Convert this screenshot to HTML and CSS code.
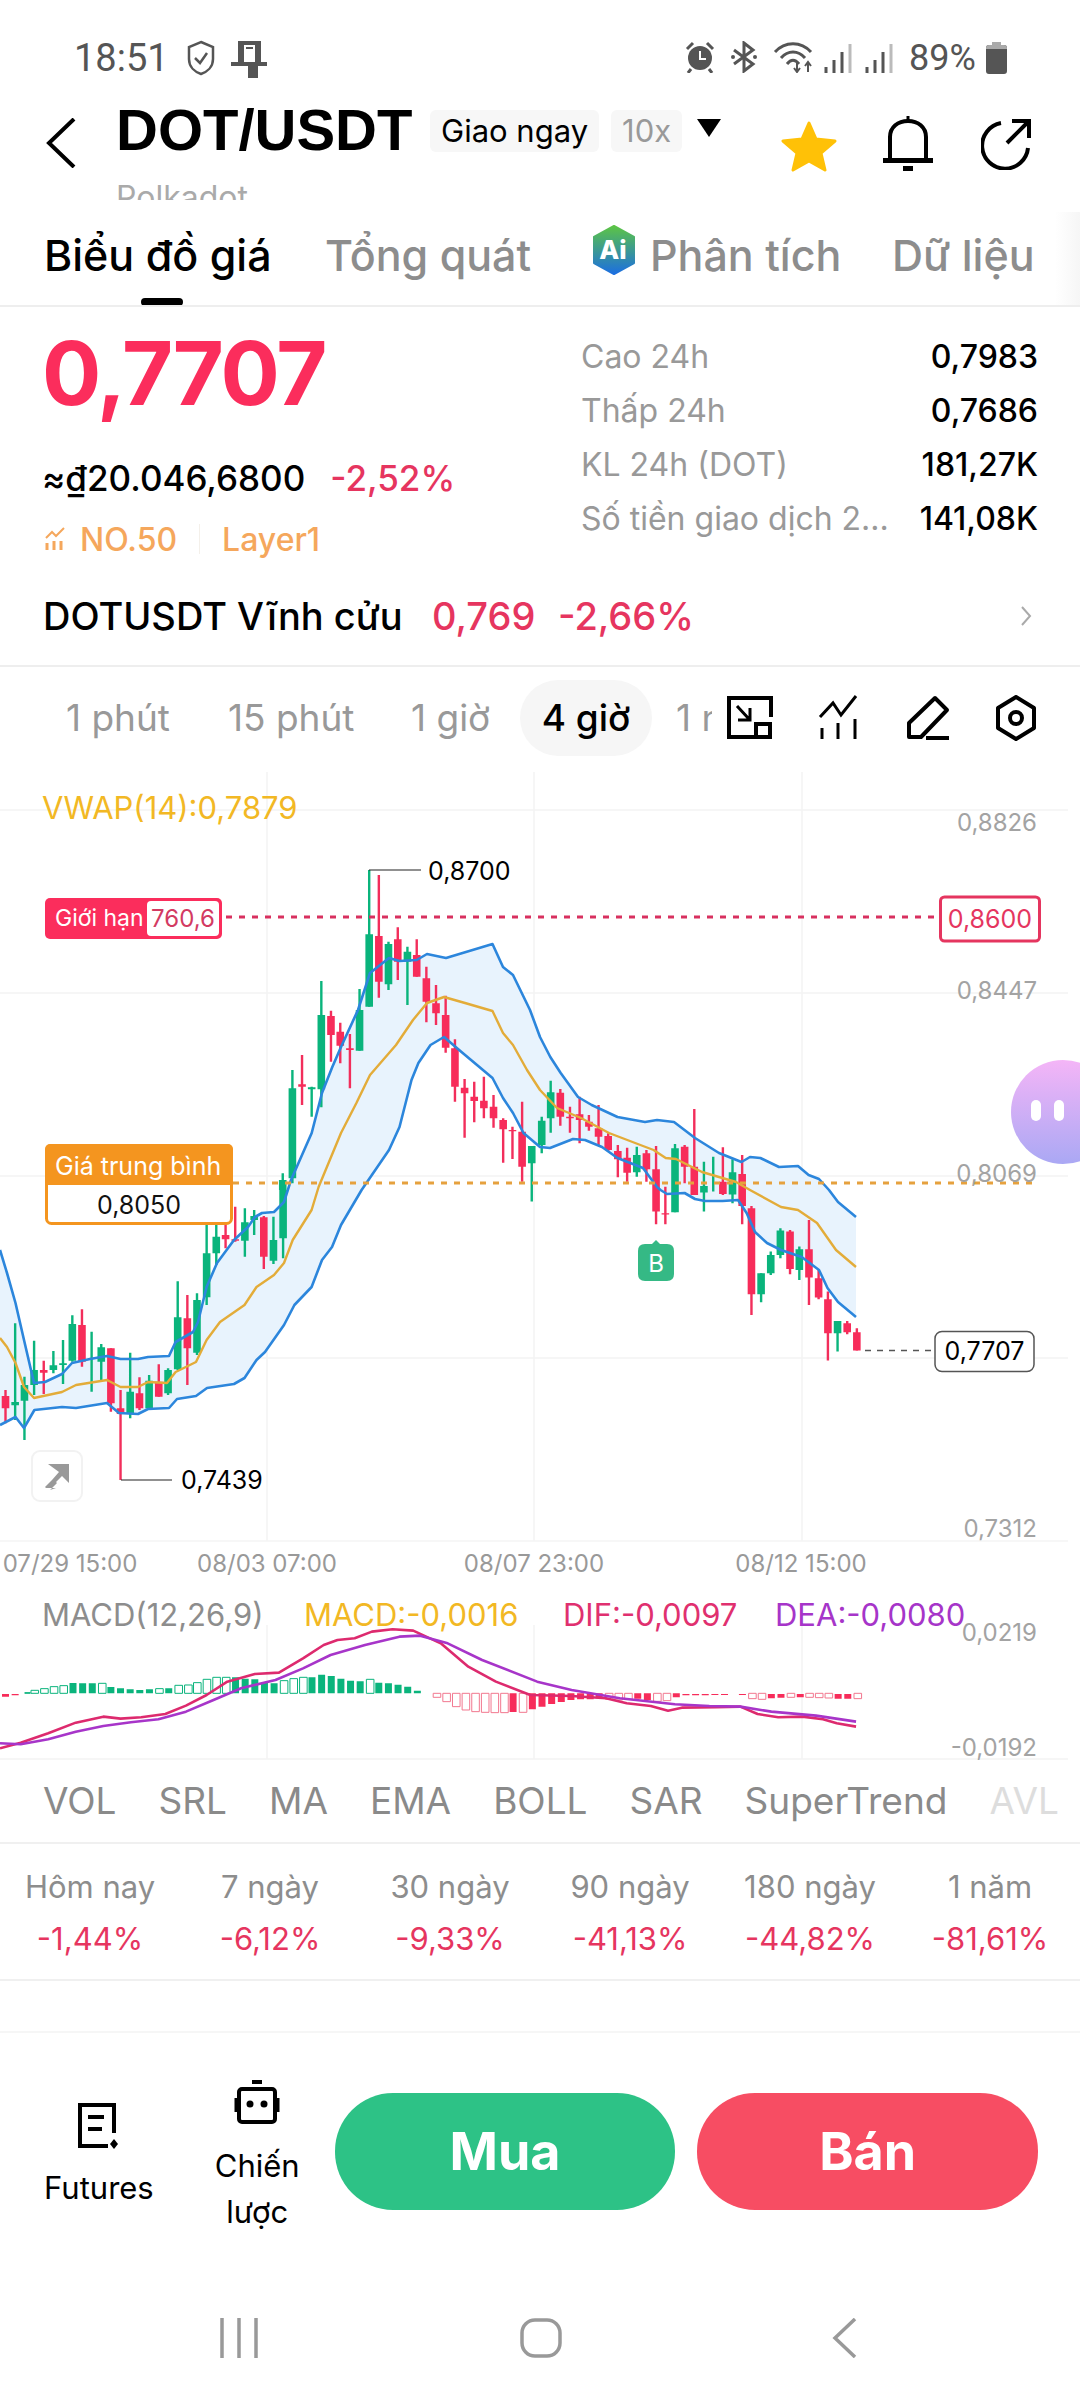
FILE: index.html
```html
<!DOCTYPE html>
<html>
<head>
  <meta charset="utf-8">
  <title>DOT/USDT</title>
  <link rel="stylesheet" href="styles.css">
</head>
<body>
  <!-- status bar -->
  <div class="status">
    <span class="time">18:51</span>
    <svg class="st-shield" viewBox="0 0 28 36"><path d="M14 2 L26 7 V19 C26 27 20 32 14 34 C8 32 2 27 2 19 V7 Z"/><path d="M8 18 L13 23 L20 13"/></svg>
    <svg class="st-device" viewBox="0 0 36 38"><path d="M7 1 H30 V22 H36 V26 H27 V38 H17 V26 H0 V22 H7 Z M13 5 V22 H24 V5 Z" fill="#555" fill-rule="evenodd"/><rect x="15" y="7" width="7" height="2" fill="#555"/></svg>
    <span class="st-spacer"></span>
    <svg class="st-alarm" viewBox="0 0 30 32"><circle cx="15" cy="17" r="12" fill="#555"/><path d="M15 10 V18 H21" stroke="#fff" stroke-width="2" fill="none"/><path d="M2 8 L8 2 M28 8 L22 2 M6 28 L3 32 M24 28 L27 32" stroke="#555" stroke-width="3"/></svg>
    <svg class="st-bt" viewBox="0 0 28 32"><path d="M4 9 L23 23 L14 30 V2 L23 9 L4 23" fill="none" stroke="#555" stroke-width="3"/><circle cx="3" cy="16" r="2" fill="#555"/><circle cx="25" cy="16" r="2" fill="#555"/></svg>
    <svg class="st-wifi" viewBox="0 0 42 32"><path d="M2 11 C12 0 28 0 38 11 M8 17 C15 9 25 9 32 17 M14 23 C18 18 22 18 26 23" fill="none" stroke="#555" stroke-width="3"/><path d="M24 20 V31 M21 27 L24 31 L27 27 M35 31 V22 M32 25 L35 21 L38 25" fill="none" stroke="#555" stroke-width="2"/></svg>
    <svg class="st-sig" viewBox="0 0 28 30"><path d="M2 30 V24 M10 30 V17 M18 30 V9" stroke="#555" stroke-width="3"/><path d="M26 30 V1" stroke="#bbb" stroke-width="3"/></svg>
    <svg class="st-sig st-sig2" viewBox="0 0 28 30"><path d="M2 30 V24 M10 30 V17 M18 30 V9" stroke="#555" stroke-width="3"/><path d="M26 30 V1" stroke="#bbb" stroke-width="3"/></svg>
    <span class="pct">89%</span>
    <svg class="st-batt" viewBox="0 0 21 32"><path d="M6 0 H15 V3 H18 Q21 3 21 6 V29 Q21 32 18 32 H3 Q0 32 0 29 V6 Q0 3 3 3 H6 Z" fill="#555"/><path d="M6 0 H15 V3 H18 Q21 3 21 6 V7 H0 V6 Q0 3 3 3 H6 Z" fill="#aaa"/></svg>
  </div>

  <!-- header -->
  <div class="header">
    <svg class="back" viewBox="0 0 30 50"><path d="M28 1 L3 25 L28 49" transform="translate(0 0)"/></svg>
    <div class="title-block">
      <div class="title-row">
        <span class="pair">DOT/USDT</span>
        <span class="tag">Giao ngay</span>
        <span class="tag tag-lev">10x</span>
        <span class="caret"></span>
      </div>
      <div class="coin-name">Polkadot</div>
    </div>
    <svg class="ic-star" viewBox="0 0 58 52"><path d="M29 3 L36 19 L55 21 L41 33 L45 50 L29 41 L13 50 L17 33 L3 21 L22 19 Z"/></svg>
    <svg class="ic-bell" viewBox="0 0 50 56"><path d="M7 45 V22 C7 12 15 6 25 6 C35 6 43 12 43 22 V45" fill="none" stroke="#000" stroke-width="4"/><path d="M25 1 V7" stroke="#000" stroke-width="3"/><rect x="0" y="43" width="50" height="5" fill="#000"/><rect x="20" y="51" width="10" height="5" fill="#000"/></svg>
    <svg class="ic-share" viewBox="0 0 52 52"><path d="M20 5 A23 23 0 1 0 47 30" fill="none" stroke="#000" stroke-width="4"/><path d="M26 25 L47 4 M31 3 H48 V20" fill="none" stroke="#000" stroke-width="4"/></svg>
  </div>

  <!-- tabs -->
  <div class="tabs">
    <span class="tab tab-on">Biểu đồ giá</span>
    <span class="tab tab-overview">Tổng quát</span>
    <svg class="ai-logo" viewBox="0 0 44 50">
      <defs><linearGradient id="aig" x1="0" y1="0" x2="0" y2="1"><stop offset="0" stop-color="#5cc445"/><stop offset="1" stop-color="#1c6fe0"/></linearGradient></defs>
      <path d="M22 1 L42 12 V38 L22 49 L2 38 V12 Z" fill="url(#aig)" stroke="url(#aig)" stroke-width="2" stroke-linejoin="round"/>
      <text x="21" y="34" class="ai-text">Ai</text>
    </svg>
    <span class="tab tab-ai">Phân tích</span>
    <span class="tab tab-data">Dữ liệu</span>
    <span class="tab-line"></span>
    <span class="tab-fade"></span>
  </div>

  <!-- price block -->
  <div class="price-block">
    <div class="price-left">
      <div class="last">0,7707</div>
      <div class="conv"><span class="conv-val">≈₫20.046,6800</span><span class="conv-pct">-2,52%</span></div>
      <div class="rank">
        <svg class="rank-ic" viewBox="0 0 22 24"><path d="M2 11 L8 5 L12 9 L20 1" fill="none" stroke="#f5a75c" stroke-width="2"/><path d="M3 16 V23 M10 14 V23 M17 14 V23" stroke="#f5a75c" stroke-width="3"/></svg>
        <span class="rank-no">NO.50</span>
        <span class="rank-sep"></span>
        <span>Layer1</span>
      </div>
    </div>
    <div class="stats">
      <div class="stat"><span class="stat-k">Cao 24h</span><span class="stat-v">0,7983</span></div>
      <div class="stat"><span class="stat-k">Thấp 24h</span><span class="stat-v">0,7686</span></div>
      <div class="stat"><span class="stat-k">KL 24h (DOT)</span><span class="stat-v">181,27K</span></div>
      <div class="stat"><span class="stat-k">Số tiền giao dịch 2...</span><span class="stat-v">141,08K</span></div>
    </div>
  </div>

  <!-- perpetual row -->
  <div class="perp">
    <span class="perp-name">DOTUSDT Vĩnh cửu</span>
    <span class="perp-price">0,769</span>
    <span class="perp-pct">-2,66%</span>
    <svg class="perp-arrow" viewBox="0 0 12 22"><path d="M2 2 L10 11 L2 20"/></svg>
  </div>

  <!-- timeframe row -->
  <div class="frames">
    <span class="frame f1">1 phút</span>
    <span class="frame f2">15 phút</span>
    <span class="frame f3">1 giờ</span>
    <span class="frame frame-on">4 giờ</span>
    <span class="frame f5">1 ngày</span>
    <div class="tools">
      <svg class="tool" viewBox="0 0 46 46"><path d="M28 42 H2 V3 H44 V22" fill="none" stroke="#000" stroke-width="4"/><rect x="29" y="29" width="14" height="13" fill="none" stroke="#000" stroke-width="4"/><path d="M10 11 L22 24 M23 13 V25 H11" fill="none" stroke="#000" stroke-width="3"/></svg>
      <svg class="tool tool-chart" viewBox="0 0 42 46"><path d="M2 22 L15 8 L23 20 L38 1" fill="none" stroke="#000" stroke-width="3"/><path d="M4 33 V44 M20 28 V44 M37 24 V44" stroke="#000" stroke-width="3"/></svg>
      <svg class="tool tool-pen" viewBox="0 0 44 46"><path d="M3 42 V28 L29 3 L41 15 L15 42 Z" fill="none" stroke="#000" stroke-width="4" stroke-linejoin="round"/><path d="M20 43 H43" stroke="#000" stroke-width="4"/></svg>
      <svg class="tool tool-set" viewBox="0 0 42 46"><path d="M21 2 L39 13 V33 L21 44 L3 33 V13 Z" fill="none" stroke="#000" stroke-width="4" stroke-linejoin="round"/><circle cx="21" cy="23" r="6" fill="none" stroke="#000" stroke-width="4"/></svg>
    </div>
  </div>

  <!-- price chart -->
  <div class="chart">
    <svg class="chart-svg" viewBox="0 772 1080 813" width="1080" height="813">
      <path class="grid" d="M0 810H1068M0 993H1068M0 1176H1068M0 1358H1068M267 772V1541M534 772V1541M802 772V1541"/>
      <polygon class="band" points="0,1250 7,1273 15.5,1303 24,1340 34,1383 45,1382 62,1374 72,1363 90,1359 107,1356 120.5,1359 138,1359 148,1357 169,1356 175.6,1342 193,1332 198,1322 206.6,1287 217,1263 234,1240 248,1227 255,1217 262,1213 274,1212 284,1202 291,1180 311.7,1133 322,1093 332.3,1067 341,1047 358,1010 370,973 389,958 399.5,961 416.7,960 427,954 446,958 492.5,944 503,967 513,975 530,1010 540,1037 550.3,1057 560.7,1073 578,1097 591.7,1105 617.5,1117 645,1122 657,1120 674,1122 695,1138 719,1153 741.5,1162 750,1157 760.4,1158 779,1167 798,1166 808.6,1175 819,1179 829,1190 838,1202 856,1217 856,1317 838,1302 827.5,1288 819,1270 801.7,1257 781,1250 767,1243 755,1232 746.6,1213 738,1200 722.5,1201 705,1201 695,1199 684.6,1193 667,1194 660.5,1190 657,1187 643,1168 617.5,1158 602,1147 585,1140 573,1139 550,1148 540,1147 523.5,1133 513,1113 503,1098 492.5,1078 461.5,1052 444,1037 430.5,1045 418.4,1063 411.5,1080 399.5,1127 389,1150 361.6,1190 341,1225 332,1247 322,1260 311.6,1287 294.4,1305 284,1325 265,1352 256.5,1360 244.5,1378 234,1384 207,1388 196,1396 177,1399 169,1408 148,1409 138,1414 119,1413 107,1403 76,1408 62,1407 34.4,1410 24,1428 15.5,1417 0,1425"/>

      <g transform="translate(0 1190) scale(.3444 .3333)">
        <path class="wick-up" d="M44 400V690M71 560V750M99 452V615M155 483V550M183 450V582M210 376V515M266 425V605M294 462V570M378 488V685M433 555V655M488 535V615M516 274V540M572 310V495M600 105V345M628 105V225M711 55V200M738 60V135M794 80V222M822 0V205"/>
        <path class="body-up" d="M44 636V646M71 585V632M99 540V585M155 526V540M183 520V525M210 402V512M294 472V515M378 605V672M433 572V655M488 540V610M516 382V538M572 330V488M600 190V322M628 140V190M711 97V152M738 78V90M794 150V212M822 0V145"/>
        <path class="wick-dn" d="M16 600V700M127 512V612M238 358V530M322 475V665M350 600V870M405 562V660M461 523V620M544 315V585M655 105V175M683 50V155M766 78V237"/>
        <path class="body-dn" d="M16 618V655M127 540V548M238 405V515M322 475V640M350 655V672M405 610V655M461 575V620M544 385V475M655 135V148M683 148V152M766 82V200"/>
      </g>
      <g transform="translate(0 770) scale(.3444 .3333)">
        <path class="wick-up" d="M821 1210V1260M849 900V1240M905 950V1040M933 633V1012M1044 657V842M1072 300V710M1128 515V660M1183 530V705M1544 1128V1295"/>
        <path class="body-up" d="M821 1230V1260M849 955V1225M905 952V958M933 735V958M1044 720V842M1072 493V710M1128 522V643M1183 545V575M1544 1128V1180"/>
        <path class="wick-dn" d="M877 855V1005M961 722V875M988 758V880M1016 792V955M1100 315V683M1155 472V630M1210 508V620M1238 590V757M1266 645V765M1294 677V848M1321 808V995M1349 927V1103M1377 935V1057M1405 920V1045M1433 975V1073M1461 1045V1178M1488 1070V1167M1516 995V1235"/>
        <path class="body-dn" d="M877 943V950M961 738V795M988 785V827M1016 835V840M1100 498V635M1155 508V575M1210 555V620M1238 625V695M1266 700V730M1294 735V833M1321 835V950M1349 953V970M1377 980V993M1405 992V1015M1433 1010V1045M1461 1050V1078M1488 1080V1084M1516 1085V1190"/>
      </g>
      <g transform="translate(540 770) scale(.3444 .3333)">
        <path class="wick-up" d="M5 1040V1150M31 932V1088M281 1130V1220M392 1122V1327M476 1175V1325M503 1160V1265M559 1168V1300M642 1510V1597M670 1445V1515M698 1375V1465M753 1430V1530M864 1653V1745"/>
        <path class="body-up" d="M5 1052V1125M31 967V1045M281 1155V1207M392 1135V1327M476 1248V1268M559 1207V1274M642 1510V1573M670 1455V1510M698 1382V1455M753 1438V1500M864 1653V1690"/>
        <path class="wick-dn" d="M59 957V1067M87 1010V1088M115 980V1120M142 1035V1082M170 1005V1125M198 1090V1145M226 1125V1222M253 1133V1235M309 1140V1235M337 1128V1363M364 1250V1363M420 1125V1240M448 1017V1275M531 1132V1275M587 1155V1363M614 1308V1635M726 1380V1513M781 1350V1605M809 1500V1588M836 1565V1772M892 1653V1693M920 1675V1742"/>
        <path class="body-dn" d="M59 968V1040M87 1040V1045M115 1033V1050M142 1055V1070M170 1075V1100M198 1098V1140M226 1143V1168M253 1163V1208M309 1150V1198M337 1198V1325M364 1330V1334M420 1130V1190M448 1190V1275M531 1235V1272M587 1212V1308M614 1315V1573M726 1385V1497M781 1438V1523M809 1525V1583M836 1588V1690M892 1660V1687M920 1687V1742"/>
      </g>

      <polyline class="line-blue" points="0,1250 7,1273 15.5,1303 24,1340 34,1383 45,1382 62,1374 72,1363 90,1359 107,1356 120.5,1359 138,1359 148,1357 169,1356 175.6,1342 193,1332 198,1322 206.6,1287 217,1263 234,1240 248,1227 255,1217 262,1213 274,1212 284,1202 291,1180 311.7,1133 322,1093 332.3,1067 341,1047 358,1010 370,973 389,958 399.5,961 416.7,960 427,954 446,958 492.5,944 503,967 513,975 530,1010 540,1037 550.3,1057 560.7,1073 578,1097 591.7,1105 617.5,1117 645,1122 657,1120 674,1122 695,1138 719,1153 741.5,1162 750,1157 760.4,1158 779,1167 798,1166 808.6,1175 819,1179 829,1190 838,1202 856,1217"/>
      <polyline class="line-gold" points="0,1338 7,1347 15.5,1363 24,1387 34,1398 62,1392 76,1385 107,1380 120.5,1387 138,1387 148,1382 167,1383 175.6,1372 196,1362 206.6,1340 220,1322 244.5,1305 256.5,1287 274,1275 284,1263 292.7,1240 311.6,1210 318.6,1187 341,1133 356.4,1103 370,1075 396,1045 413,1020 427,1003 444,997 465,1003 492.5,1011 503,1033 513,1045 527,1070 540,1090 557,1108 581,1118 609,1133 643,1146 653.6,1150 665.7,1158 676,1159 702,1172 736,1182 750,1190 781,1207 798,1210 817,1223 836,1250 856,1267"/>
      <polyline class="line-blue" points="0,1425 15.5,1417 24,1428 34.4,1410 62,1407 76,1408 107,1403 119,1413 138,1414 148,1409 169,1408 177,1399 196,1396 207,1388 234,1384 244.5,1378 256.5,1360 265,1352 284,1325 294.4,1305 311.6,1287 322,1260 332,1247 341,1225 361.6,1190 389,1150 399.5,1127 411.5,1080 418.4,1063 430.5,1045 444,1037 461.5,1052 492.5,1078 503,1098 513,1113 523.5,1133 540,1147 550,1148 573,1139 585,1140 602,1147 617.5,1158 643,1168 657,1187 660.5,1190 667,1194 684.6,1193 695,1199 705,1201 722.5,1201 738,1200 746.6,1213 755,1232 767,1243 781,1250 801.7,1257 819,1270 827.5,1288 838,1302 856,1317"/>

      <text class="legend-vwap" x="42" y="819">VWAP(14):0,7879</text>

      <!-- extreme marks -->
      <path class="mark-line" d="M369 870H421M121 1480H172"/>
      <text class="lbl" x="428" y="880">0,8700</text>
      <text class="lbl" x="181" y="1489">0,7439</text>

      <!-- limit order -->
      <path class="dash-red" d="M226 917H940"/>
      <rect class="limit-bg" x="45" y="898" width="177" height="41" rx="5"/>
      <rect class="limit-in" x="147" y="901" width="72" height="35" rx="4"/>
      <text class="limit-k" x="55" y="926">Giới hạn</text>
      <text class="limit-v" x="183" y="927">760,6</text>
      <rect class="limit-box" x="940.5" y="897" width="99" height="44" rx="4"/>
      <text class="limit-p" x="990" y="928">0,8600</text>

      <!-- average price -->
      <path class="dash-orange" d="M233 1183H1037"/>
      <rect class="avg-box" x="46.5" y="1145.5" width="185" height="78" rx="5"/>
      <path class="avg-top" d="M45 1185V1149a5 5 0 0 1 5-5H228a5 5 0 0 1 5 5V1185Z"/>
      <text class="avg-k" x="55" y="1175">Giá trung bình</text>
      <text class="avg-v" x="139" y="1214">0,8050</text>

      <!-- buy marker -->
      <path class="mark-b" d="M645 1244H652L656 1240L660 1244H667Q674 1244 674 1251V1274Q674 1281 667 1281H645Q638 1281 638 1274V1251Q638 1244 645 1244Z"/>
      <text class="mark-b-t" x="656" y="1272">B</text>

      <!-- last price -->
      <path class="dash-last" d="M865 1350.5H932"/>
      <rect class="last-box" x="935" y="1331.5" width="99" height="40" rx="7"/>
      <text class="lbl lbl-mid" x="984.5" y="1360">0,7707</text>

      <!-- expand -->
      <rect class="expand-box" x="32" y="1451" width="50" height="50" rx="8"/>
      <path class="expand-ic" d="M48 1464H69V1464L69 1483 L62 1476 L55 1483 L52 1480 L59 1472 Z M45 1487L53 1479L57 1483L50 1490L56 1488L56 1488L46 1488Z"/>

      <text class="axis" x="1037" y="831">0,8826</text>
      <text class="axis" x="1037" y="999">0,8447</text>
      <text class="axis" x="1037" y="1182">0,8069</text>
      <text class="axis" x="1037" y="1537">0,7312</text>

      <path class="grid" d="M0 1541H1068"/>
      <text class="time-lbl" x="70" y="1572">07/29 15:00</text>
      <text class="time-lbl" x="267" y="1572">08/03 07:00</text>
      <text class="time-lbl" x="534" y="1572">08/07 23:00</text>
      <text class="time-lbl" x="801" y="1572">08/12 15:00</text>
    </svg>
    <div class="bot"><span class="bot-eye"></span><span class="bot-eye"></span></div>
  </div>

  <!-- macd -->
  <div class="macd">
    <svg class="macd-svg" viewBox="0 1585 1080 175" width="1080" height="175">
      <path class="grid" d="M267 1625V1759M534 1625V1759M802 1625V1759M0 1759H1068"/>
      <g transform="translate(0 1560) scale(.6887 .3333)">
        <path class="hist-up" d="M106 369V400M120 370V400M134 370V400M161 381V400M175 385V400M189 388V400M203 390V400M217 388V400M245 385V400M342 352V400M356 356V400M370 358V400M384 368V400M398 370V400M453 352V400M467 344V400M481 348V400M495 356V400M509 362V400M523 364V400M550 368V400M564 370V400M578 374V400M592 380V400M606 392V400"/>
        <path class="hist-up-h" d="M36 398h8V400h-8zM45 391h11V400h-11zM59 386h11V400h-11zM73 380h11V400h-11zM87 377h11V400h-11zM143 370h11V400h-11zM226 386h11V400h-11zM254 376h11V400h-11zM268 375h11V400h-11zM281 368h11V400h-11zM295 358h11V400h-11zM309 352h11V400h-11zM323 352h11V400h-11zM407 362h11V400h-11zM421 356h11V400h-11zM435 352h11V400h-11zM532 358h11V400h-11z"/>
        <path class="hist-dn" d="M8 402V410M22 402V406M745 400V456M773 400V448M787 400V440M801 400V432M815 400V426M829 400V420M843 400V418M857 400V418M870 400V415M926 400V416M940 400V420M982 400V412M996 402V406M1010 402V406M1024 402V406M1038 402V405M1052 402V405M1078 402V405M1120 402V415M1134 402V413M1162 402V412M1217 402V416M1231 402V416"/>
        <path class="hist-dn-h" d="M629 400h11V412h-11zM643 400h11V425h-11zM657 400h11V440h-11zM671 400h11V450h-11zM685 400h11V455h-11zM699 400h11V457h-11zM713 400h11V458h-11zM727 400h11V458h-11zM754 400h11V457h-11zM879 400h11V418h-11zM893 400h11V420h-11zM907 400h11V418h-11zM949 400h11V424h-11zM963 400h11V422h-11zM1087 400h11V416h-11zM1101 400h11V418h-11zM1143 400h11V412h-11zM1170 400h11V412h-11zM1184 400h11V413h-11zM1198 400h11V414h-11zM1240 400h11V416h-11z"/>
        <polyline class="line-dif" points="0,565 30,548 70,520 110,488 150,470 175,476 205,472 240,462 270,437 300,405 330,365 370,342 405,338 440,295 470,255 490,240 515,235 540,215 570,208 600,212 640,250 680,320 720,365 770,405 830,408 880,415 910,430 945,438 970,452 990,443 1040,442 1075,440 1100,462 1130,472 1165,470 1195,478 1215,490 1243,500"/>
        <polyline class="line-dea" points="0,550 30,553 70,538 110,515 150,498 190,487 230,478 270,455 310,420 350,385 400,360 440,325 480,285 530,255 580,230 610,227 650,250 700,300 780,365 830,390 900,415 980,433 1030,438 1075,440 1120,455 1185,467 1243,485"/>
      </g>
      <text class="axis axis-macd" x="1037" y="1641">0,0219</text>
      <text class="axis axis-macd" x="1037" y="1756">-0,0192</text>
    </svg>
    <div class="macd-legend">
      <span class="m-name">MACD(12,26,9)</span>
      <span class="m-macd">MACD:-0,0016</span>
      <span class="m-dif">DIF:-0,0097</span>
      <span class="m-dea">DEA:-0,0080</span>
    </div>
  </div>

  <!-- indicators -->
  <div class="indicators">
    <span>VOL</span><span>SRL</span><span>MA</span><span>EMA</span><span>BOLL</span><span>SAR</span><span>SuperTrend</span><span class="ind-fade">AVL</span>
  </div>

  <!-- performance -->
  <div class="perf">
    <div class="perf-col"><span class="perf-k">Hôm nay</span><span class="perf-v">-1,44%</span></div>
    <div class="perf-col"><span class="perf-k">7 ngày</span><span class="perf-v">-6,12%</span></div>
    <div class="perf-col"><span class="perf-k">30 ngày</span><span class="perf-v">-9,33%</span></div>
    <div class="perf-col"><span class="perf-k">90 ngày</span><span class="perf-v">-41,13%</span></div>
    <div class="perf-col"><span class="perf-k">180 ngày</span><span class="perf-v">-44,82%</span></div>
    <div class="perf-col"><span class="perf-k">1 năm</span><span class="perf-v">-81,61%</span></div>
  </div>
  <div class="gap-row"></div>

  <!-- actions -->
  <div class="actions">
    <div class="act act-fut">
      <svg class="act-ic" viewBox="0 0 42 46"><path d="M30 43 H2 V2 H36 V30" fill="none" stroke="#000" stroke-width="4"/><path d="M10 14 H26 M10 26 H24" stroke="#000" stroke-width="4"/><path d="M36 36 L40 41 L36 46 L32 41 Z" fill="#000"/></svg>
      <span>Futures</span>
    </div>
    <div class="act act-bot">
      <svg class="act-ic" viewBox="0 0 46 44"><path d="M18 0 H28 V4 H18 Z" fill="#000"/><rect x="5" y="9" width="36" height="33" rx="3" fill="none" stroke="#000" stroke-width="4"/><circle cx="16" cy="24" r="3.5" fill="#000"/><circle cx="30" cy="24" r="3.5" fill="#000"/><path d="M2 18 V32 M44 18 V32" stroke="#000" stroke-width="3"/></svg>
      <span>Chiến<br>lược</span>
    </div>
    <div class="btn btn-buy">Mua</div>
    <div class="btn btn-sell">Bán</div>
  </div>

  <!-- nav bar -->
  <div class="nav">
    <svg class="nav-recent" viewBox="0 0 38 40"><path d="M2 0 V40 M19 0 V40 M36 0 V40"/></svg>
    <svg class="nav-home" viewBox="0 0 42 40"><rect x="2" y="2" width="38" height="36" rx="13"/></svg>
    <svg class="nav-back" viewBox="0 0 25 40"><path d="M23 1 L3 20 L23 39"/></svg>
  </div>
</body>
</html>
```

FILE: styles.css
```css
* {
  box-sizing: border-box;
}

html, body {
  margin: 0;
  padding: 0;
  background: #fff;
}

body {
  width: 1080px;
  height: 2400px;
  overflow: hidden;
  font-family: Inter, "Noto Sans", "Liberation Sans", sans-serif;
  color: #000;
}

svg {
  display: block;
  flex: none;
}

/* status bar */
.status {
  height: 90px;
  padding: 40px 73px 0 74px;
  display: flex;
  align-items: flex-start;
  color: #555;
}

.time {
  font-family: Roboto, sans-serif;
  font-size: 38px;
  line-height: 36px;
  width: 113px;
}

.st-shield { width: 28px; height: 36px; fill: none; stroke: #555; stroke-width: 2.5; }
.st-device { width: 36px; height: 38px; margin-left: 16px; }
.st-spacer { flex: 1; }
.st-alarm { width: 30px; height: 32px; margin-top: 1px; }
.st-bt { width: 28px; height: 32px; margin: 1px 0 0 15px; }
.st-wifi { width: 42px; height: 32px; margin: 1px 0 0 15px; }
.st-sig { width: 28px; height: 30px; margin: 3px 0 0 9px; }
.st-sig2 { margin-left: 13px; }

.pct {
  font-family: Roboto, sans-serif;
  font-size: 36px;
  line-height: 36px;
  margin-left: 16px;
  width: 77px;
}

.st-batt { width: 21px; height: 32px; margin-top: 2px; }

/* header */
.header {
  height: 110px;
  padding-left: 46px;
  display: flex;
  align-items: flex-start;
  overflow: hidden;
}

.back {
  width: 30px;
  height: 50px;
  margin-top: 28px;
  fill: none;
  stroke: #000;
  stroke-width: 4;
}

.title-block {
  width: 666px;
  margin-left: 40px;
}

.title-row {
  height: 80px;
  display: flex;
  align-items: center;
}

.pair {
  font-family: "Liberation Sans", sans-serif;
  font-weight: 700;
  font-size: 58px;
  line-height: 80px;
  width: 314px;
  white-space: nowrap;
}

.tag {
  height: 42px;
  padding: 0 11px;
  margin-top: 2px;
  border-radius: 6px;
  background: #f7f7f7;
  font-size: 31px;
  line-height: 42px;
  white-space: nowrap;
}

.tag-lev {
  margin-left: 12px;
  color: #999;
}

.caret {
  width: 0;
  height: 0;
  margin: -4px 0 0 15px;
  border-left: 12px solid transparent;
  border-right: 12px solid transparent;
  border-top: 18px solid #000;
}

.coin-name {
  margin-top: 8px;
  font-size: 32px;
  line-height: 40px;
  color: #aaa;
}

.ic-star { width: 58px; height: 52px; margin: 30px 0 0 -2px; fill: #ffc107; stroke: #ffc107; stroke-width: 3; stroke-linejoin: round; }
.ic-bell { width: 50px; height: 56px; margin: 25px 0 0 45px; }
.ic-share { width: 52px; height: 52px; margin: 28px 0 0 48px; }

/* tabs */
.tabs {
  height: 107px;
  padding: 26px 0 0 44px;
  position: relative;
  display: flex;
  align-items: flex-start;
  border-bottom: 2px solid #eee;
  overflow: hidden;
}

.tab {
  font-size: 43px;
  line-height: 58px;
  color: #8d8d8d;
  white-space: nowrap;
  font-weight: 500;
}

.tab-on { color: #000; width: 281px; }
.tab-overview { width: 267px; }
.ai-logo { width: 44px; height: 50px; margin: -1px 14px 0 0; }
.tab-ai { width: 242px; }

.ai-text {
  font-family: Inter, sans-serif;
  font-weight: 800;
  font-size: 26px;
  fill: #fff;
  text-anchor: middle;
}

.tab-line {
  position: absolute;
  left: 141px;
  top: 98px;
  width: 42px;
  height: 8px;
  border-radius: 4px;
  background: #000;
}

.tab-fade {
  position: absolute;
  top: 12px;
  right: 0;
  width: 25px;
  height: 95px;
  background: linear-gradient(90deg, rgba(245,245,245,0), #f6f6f6);
}

/* price block */
.price-block {
  height: 293px;
  padding: 0 42px;
  display: flex;
  justify-content: space-between;
}

.last {
  margin-top: 30px;
  height: 72px;
  font-family: Inter, sans-serif;
  font-weight: 700;
  font-size: 88px;
  line-height: 72px;
  color: #fb2d5c;
  letter-spacing: -2px;
}

.conv {
  margin-top: 47px;
  display: flex;
  gap: 25px;
  font-size: 35px;
  line-height: 44px;
}

.conv-val { font-weight: 500; }
.conv-pct { color: #e6355f; font-weight: 500; }

.rank {
  margin-top: 19px;
  height: 40px;
  display: flex;
  align-items: center;
  font-size: 32px;
  font-weight: 500;
  color: #f5a75c;
}

.rank-ic { width: 22px; height: 24px; margin: 0 14px 0 2px; }

.rank-sep {
  width: 1px;
  height: 30px;
  margin: 0 22px;
  background: #f4f0ea;
}

.stats {
  width: 457px;
  margin-top: 30px;
  display: flex;
  flex-direction: column;
  gap: 14px;
}

.stat {
  display: flex;
  justify-content: space-between;
  height: 40px;
  font-size: 32px;
  line-height: 40px;
  white-space: nowrap;
}

.stat-k { color: #999; }
.stat-v { font-weight: 500; }

/* perpetual row */
.perp {
  height: 67px;
  padding: 0 48px 0 43px;
  display: flex;
  align-items: flex-start;
  border-bottom: 2px solid #eee;
  font-size: 38px;
  line-height: 46px;
  font-weight: 500;
  margin-top: -7px;
  height: 74px;
}

.perp-name { width: 389px; white-space: nowrap; }
.perp-price { width: 126px; color: #e6355f; }
.perp-pct { color: #e6355f; }
.perp-arrow { width: 12px; height: 22px; margin: 12px 0 0 auto; fill: none; stroke: #aaa; stroke-width: 2; }

/* timeframe row */
.frames {
  height: 105px;
  position: relative;
  display: flex;
  align-items: flex-start;
  overflow: hidden;
  font-size: 37px;
  line-height: 46px;
  color: #999;
}

.frame {
  margin-top: 28px;
  white-space: nowrap;
}

.f1 { margin-left: 66px; width: 162px; }
.f2 { width: 183px; }
.f3 { width: 109px; }

.frame-on {
  margin-top: 13px;
  width: 132px;
  height: 76px;
  text-align: center;
  line-height: 76px;
  border-radius: 38px;
  background: #f6f6f6;
  color: #000;
  font-weight: 500;
}

.f5 { margin-left: 24px; }

.tools {
  position: absolute;
  top: 28px;
  left: 712px;
  height: 50px;
  width: 368px;
  padding: 0 43px 0 15px;
  display: flex;
  justify-content: space-between;
  background: #fff;
}

.tool { width: 46px; height: 46px; }
.tool-chart { width: 42px; }
.tool-pen { width: 44px; }
.tool-set { width: 42px; }

/* chart */
.chart {
  height: 813px;
  position: relative;
  overflow: hidden;
}

.chart-svg {
  font-family: Inter, sans-serif;
}

.grid { stroke: #f4f4f4; stroke-width: 1.5; fill: none; }
.band { fill: #e8f3fd; }

.wick-up, .wick-dn, .body-up, .body-dn,
.hist-up, .hist-dn, .hist-up-h, .hist-dn-h,
.line-dif, .line-dea {
  vector-effect: non-scaling-stroke;
  fill: none;
}

.wick-up { stroke: #0ab47c; stroke-width: 2.4; }
.wick-dn { stroke: #f22e5b; stroke-width: 2.4; }
.body-up { stroke: #0ab47c; stroke-width: 7.6; }
.body-dn { stroke: #f72c5a; stroke-width: 7.6; }

.line-blue { fill: none; stroke: #2c86dc; stroke-width: 2.6; stroke-linejoin: round; }
.line-gold { fill: none; stroke: #e3ac39; stroke-width: 2.4; stroke-linejoin: round; }

.legend-vwap { font-size: 31px; fill: #f2b824; }
.mark-line { stroke: #222; stroke-width: 1.2; fill: none; }
.lbl { font-size: 25px; fill: #000; }
.lbl-mid { text-anchor: middle; }

.dash-red { stroke: #d8305f; stroke-width: 3; stroke-dasharray: 6 7; fill: none; }
.limit-bg { fill: #fb2d5c; }
.limit-in { fill: #fff; }
.limit-k { font-size: 23px; fill: #fff; }
.limit-v { font-size: 24px; fill: #d33a62; text-anchor: middle; }
.limit-box { fill: #fff; stroke: #e5355f; stroke-width: 3; }
.limit-p { font-size: 25px; fill: #e5355f; text-anchor: middle; }

.dash-orange { stroke: #e6a13e; stroke-width: 3; stroke-dasharray: 6 7; fill: none; }
.avg-box { fill: #fff; stroke: #f4951f; stroke-width: 3; }
.avg-top { fill: #f4951f; }
.avg-k { font-size: 25px; fill: #fff; }
.avg-v { font-size: 25px; fill: #111; text-anchor: middle; }

.mark-b { fill: #35b985; }
.mark-b-t { font-size: 24px; fill: #fff; text-anchor: middle; }

.dash-last { stroke: #555; stroke-width: 1.5; stroke-dasharray: 6 6; fill: none; }
.last-box { fill: #fff; stroke: #555; stroke-width: 1.5; }

.expand-box { fill: #fff; stroke: #f2f2f2; stroke-width: 2; }
.expand-ic { fill: #999; }

.axis { font-size: 24px; fill: #a3a3a3; text-anchor: end; }
.time-lbl { font-size: 24px; fill: #999; text-anchor: middle; }

.bot {
  position: absolute;
  left: 1011px;
  top: 288px;
  width: 104px;
  height: 104px;
  padding: 40px 0 0 20px;
  display: flex;
  gap: 13px;
  align-items: flex-start;
  border-radius: 50%;
  background: linear-gradient(180deg, #f4b5f7, #aaa8f4);
}

.bot-eye {
  width: 10px;
  height: 21px;
  border-radius: 5px;
  background: #fff;
}

/* macd */
.macd {
  height: 175px;
  position: relative;
  border-top: 0;
}

.macd-svg { font-family: Inter, sans-serif; }

.hist-up { stroke: #0ab47c; stroke-width: 7; }
.hist-dn { stroke: #f72c5a; stroke-width: 7; }
.hist-up-h { stroke: #0ab47c; stroke-width: 1; }
.hist-dn-h { stroke: #f2778f; stroke-width: 1; }
.line-dif { stroke: #dd2a6e; stroke-width: 2.6; stroke-linejoin: round; }
.line-dea { stroke: #a735c9; stroke-width: 2.6; stroke-linejoin: round; }

.macd-legend {
  position: absolute;
  left: 42px;
  top: 11px;
  display: flex;
  font-size: 31px;
  line-height: 38px;
  white-space: nowrap;
}

.m-name { color: #8d8d8d; width: 262px; }
.m-macd { color: #f2b824; width: 259px; }
.m-dif { color: #e0306f; width: 212px; }
.m-dea { color: #a635c9; }

/* indicators */
.indicators {
  height: 84px;
  padding: 18px 0 0 43px;
  display: flex;
  gap: 42px;
  overflow: hidden;
  border-bottom: 2px solid #f0f0f0;
  font-size: 37px;
  line-height: 46px;
  color: #8a8a8a;
  white-space: nowrap;
}

.ind-fade { color: #ddd; }

/* performance */
.perf {
  height: 137px;
  display: grid;
  grid-template-columns: repeat(6, 180px);
  border-bottom: 2px solid #f0f0f0;
}

.perf-col {
  padding-top: 24px;
  display: flex;
  flex-direction: column;
  align-items: center;
  gap: 14px;
  font-size: 31px;
  line-height: 38px;
}

.perf-k { color: #8d8d8d; }
.perf-v { color: #e6355f; }

.gap-row {
  height: 52px;
  border-bottom: 2px solid #f6f6f6;
}

/* actions */
.actions {
  height: 257px;
  padding: 60px 42px 0 0;
  display: flex;
  align-items: flex-start;
  position: relative;
}

.act {
  display: flex;
  flex-direction: column;
  align-items: center;
  font-size: 31px;
  line-height: 46px;
  text-align: center;
}

.act-fut {
  width: 198px;
  margin-top: 10px;
  gap: 16px;
}

.act-bot {
  width: 137px;
  margin-top: -13px;
  gap: 19px;
  margin-left: -9px;
}

.act-ic { width: 42px; height: 46px; }
.act-bot .act-ic { width: 46px; height: 44px; }

.btn {
  width: 341px;
  height: 117px;
  border-radius: 58px;
  color: #fff;
  font-weight: 700;
  font-size: 52px;
  line-height: 117px;
  text-align: center;
}

.btn-buy { background: #2dc286; margin-left: 9px; }
.btn-sell { background: #f74d63; margin-left: 22px; }

/* nav bar */
.nav {
  padding-top: 28px;
  display: flex;
  align-items: flex-start;
  fill: none;
  stroke: #999;
  stroke-width: 3.5;
}

.nav-recent { width: 38px; height: 40px; margin-left: 220px; }
.nav-home { width: 42px; height: 40px; margin-left: 262px; }
.nav-back { width: 25px; height: 40px; margin-left: 270px; }
```
